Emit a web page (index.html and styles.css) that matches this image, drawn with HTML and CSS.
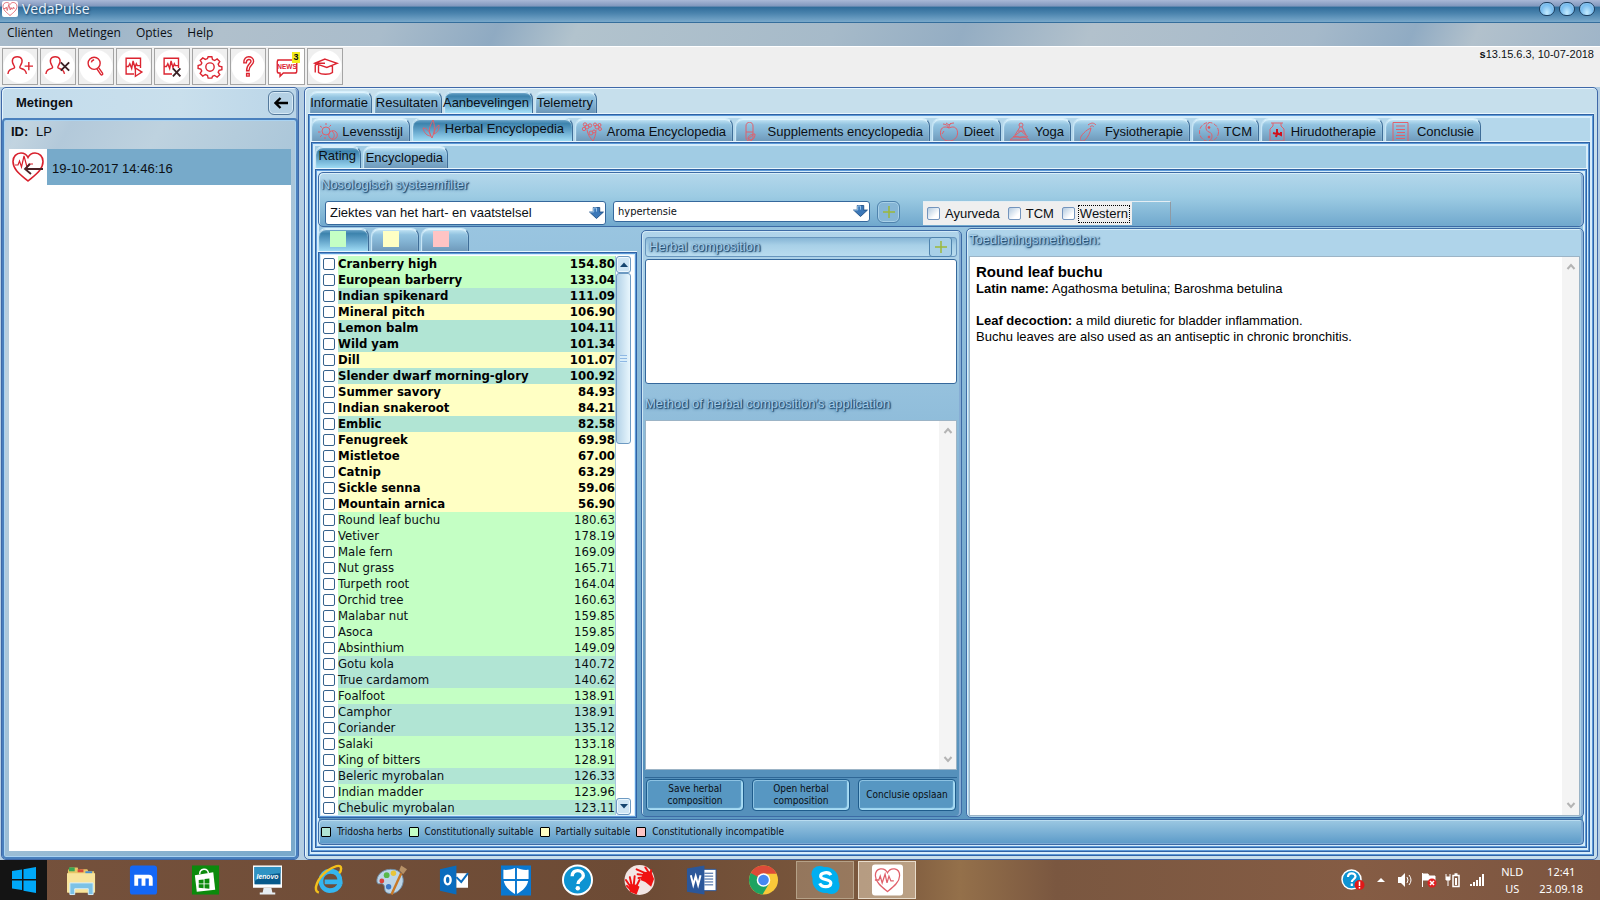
FILE: index.html
```html
<!DOCTYPE html>
<html lang="nl">
<head>
<meta charset="utf-8">
<title>VedaPulse</title>
<link rel="stylesheet" href="styles.css">
</head>
<body>
<svg class="defs" aria-hidden="true">
  <symbol id="heart" viewBox="0 0 32 32"><path d="M16 29C9 23 2 18 2 10.500C2 6 5.500 3 9.500 3c3 0 5 1.500 6.500 4c1.500-2.500 3.500-4 6.500-4C26.500 3 30 6 30 10.500C30 18 23 23 16 29z"/><path d="M3 15h4l1.500-3 2 7 3-12 3 11 1.500-5 1.500 3h2l1.500-4 1.500 4"/></symbol>
  <symbol id="user" viewBox="0 0 28 28"><path d="M1 21.500c.5-4.500 3-5 6-6 1.500-.5 1.500-1.500.5-3C4 7 6 3 11 3s7 4 3.500 9.500c-1 1.500-1 2.500.5 3 3 1 5 1.500 6 6"/></symbol>
  <symbol id="sheet" viewBox="0 0 28 28"><path d="M14 21.500H5.500v-17H21V15M5.500 13.500H8l1.500-3 2 5 1.500-8 2 7 1.500-4 1 2H21"/></symbol>
  <symbol id="drop" viewBox="0 0 16 13"><path d="M4.500.5h7v5H15.500L8 12.500.5 5.500h4z" fill="#3c78b8" stroke="#1d4f86"/><path d="M1 5.500h4V1h3v4" stroke="#9fcaf0" fill="none"/></symbol>
  <symbol id="plus" viewBox="0 0 12 12"><path d="M6 0v12M0 6h12" stroke="#9cb83a" stroke-width="1.500" fill="none"/></symbol>
  <symbol id="chev-up" viewBox="0 0 10 8"><path d="M1.500 6L5 2l3.500 4" fill="none" stroke="#b4b4b4" stroke-width="2"/></symbol>
  <symbol id="chev-down" viewBox="0 0 10 8"><path d="M1.500 2L5 6l3.500-4" fill="none" stroke="#b4b4b4" stroke-width="2"/></symbol>
  <symbol id="help" viewBox="0 0 32 32"><circle cx="16" cy="16" r="15" fill="#0d93d2" stroke="#fff" stroke-width="2"/><path d="M10.500 12c0-8 11.500-7 11.500-.5 0 4-5.500 4-5.500 8.500" fill="none" stroke="#fff" stroke-width="3.500"/><circle cx="16.300" cy="24.500" r="2.300" fill="#fff"/></symbol>
</svg>

<div class="app">
  <header class="titlebar">
    <svg class="app-logo"><use href="#heart"/></svg>
    <h1 class="app-title">VedaPulse</h1>
    <div class="window-buttons">
      <button type="button" aria-label="Minimize"></button><button type="button" aria-label="Maximize"></button><button type="button" aria-label="Close"></button>
    </div>
  </header>

  <nav class="menubar">
    <button type="button">Cliënten</button><button type="button">Metingen</button><button type="button">Opties</button><button type="button">Help</button>
  </nav>

  <div class="toolbar">
    <button type="button" class="tool" aria-label="Add client"><svg viewBox="0 0 28 28"><use href="#user"/><path d="M19 13h9M23.500 8.500v9"/></svg></button>
    <button type="button" class="tool" aria-label="Remove client"><svg viewBox="0 0 28 28"><use href="#user"/><path class="dark" d="M17 9l9 9M26 9l-9 9"/></svg></button>
    <button type="button" class="tool" aria-label="Search"><svg viewBox="0 0 28 28"><circle cx="12" cy="10" r="6.500"/><path d="M9 9c.3-2 1.500-2.500 3-2.800M15 16l4 6c1 1.500 3 0 2-1.500l-4-5.500"/></svg></button>
    <button type="button" class="tool" aria-label="Start measurement"><svg viewBox="0 0 28 28"><use href="#sheet"/><path class="filled" d="M15.500 15v9l7-4.500z"/></svg></button>
    <button type="button" class="tool" aria-label="Delete measurement"><svg viewBox="0 0 28 28"><use href="#sheet"/><path class="dark" d="M15 15.500l8 8.500M23 15.500L15 24"/></svg></button>
    <button type="button" class="tool" aria-label="Settings"><svg viewBox="0 0 28 28"><circle cx="14" cy="14" r="4.500"/><path d="M12 3h4l.7 3 2.300 1L21.700 5.300l2.800 2.800-1.700 2.700 1 2.200 3 .8v3l-3 .8-1 2 1.700 2.700-2.800 2.500-2.800-1.700-2.200 1L16 26h-4l-.7-2.900-2.300-1-2.800 1.700L3.400 21l1.700-2.700-1-2L1.200 15.500v-3l3-.9 1-2L3.500 6.900l2.700-2.700L9 5.800l2.300-.9z"/></svg></button>
    <button type="button" class="tool" aria-label="Help"><svg viewBox="0 0 28 28"><path d="M9.500 9.500c-.5-9 11-8 10.500-1.500-.3 4-5 4-5 10h-2.500c0-7 4.500-7.500 4.700-10 .2-3-5-3-5 1.500zM12.500 21h2.800v2.800h-2.800z"/></svg></button>
    <button type="button" class="tool news" aria-label="News"><svg viewBox="0 0 28 28"><path d="M3.500 6.500h19q2 0 2 2v10q0 2-2 2H10l-3.500 3.500v-3.500H5.500q-2 0-2-2v-10q0-2 2-2"/><text x="14" y="16">NEWS</text></svg><span class="badge">3</span></button>
    <button type="button" class="tool" aria-label="Academy"><svg viewBox="0 0 28 28"><path d="M14 5.500L27 10 16 14.500 3 10zM7 12v8c3 2.500 12 2.500 15 0v-7M14 10H7l-3.500 2v8"/></svg></button>
    <p class="version"><b>s</b>13.15.6.3, 10-07-2018</p>
  </div>

  <div class="main">
    <aside class="sidebar">
      <div class="side-head"><h2>Metingen</h2>
        <button type="button" class="back" aria-label="Collapse"><svg viewBox="0 0 14 12"><path d="M1 6h13M6.500 1L1.500 6l5 5" fill="none" stroke="#000" stroke-width="2.300"/></svg></button>
      </div>
      <div class="side-body">
        <p class="client"><b>ID:</b> LP</p>
        <div class="measure-list">
          <button type="button" class="measure"><svg viewBox="0 0 38 36"><path d="M19 32C12 26 4 21 4 12.500c0-5 3.500-8.500 8-8.500 3 0 5.500 1.500 7 4.500C20.500 5.500 23 4 26 4c4.500 0 8 3.500 8 8.500C34 21 26 26 19 32z" fill="none" stroke="#d8202c" stroke-width="1.600"/><path d="M6 16h3l1.500-4 2 6 2.500-11 3 11 2-3h4" fill="none" stroke="#d8202c" stroke-width="1.200"/><path d="M16 20h18M21 15l-5 5 6 5" fill="none" stroke="#4a2226" stroke-width="1.800"/></svg><span>19-10-2017 14:46:16</span></button>
        </div>
      </div>
    </aside>

    <section class="workspace">
      <div class="tabs tabs-main" role="tablist">
        <button type="button" class="tab">Informatie</button><button type="button" class="tab">Resultaten</button><button type="button" class="tab active">Aanbevelingen</button><button type="button" class="tab">Telemetry</button>
      </div>
      <div class="pane pane-a">
        <div class="tabs tabs-sub" role="tablist">
          <button type="button" class="tab"><svg viewBox="0 0 20 20"><circle cx="8" cy="9" r="4"/><path d="M8 1v2M2 4l2 1.500M0 10h2.500M2 15l2-2M7 17v-2M13 3l-1.500 1.500"/><circle cx="15" cy="13" r="4.300"/><path d="M14 9c3 3 3 6 0 8"/></svg>Levensstijl</button>
          <button type="button" class="tab active"><svg viewBox="0 0 20 20"><path d="M11 19C7 13 8 8 12 1c2 6 2 11-1 18zM10 17C8 11 5 9 2 9c1 5 4 8 8 8zM13 15c1-5 2-7 5-9 0 5-1 7-5 9z"/></svg>Herbal Encyclopedia</button>
          <button type="button" class="tab"><svg viewBox="0 0 20 20"><circle cx="5" cy="5" r="2"/><circle cx="3" cy="2.500" r="1.700"/><circle cx="8" cy="3.500" r="1.700"/><circle cx="2" cy="7" r="1.700"/><circle cx="15" cy="5" r="2"/><circle cx="17.500" cy="3" r="1.500"/><circle cx="18" cy="7" r="1.500"/><circle cx="13" cy="2.500" r="1.500"/><circle cx="9" cy="11" r="2"/><circle cx="12" cy="9.500" r="1.500"/><path d="M5 8c1 5 3 8 6 11M14 8c0 5-2 9-3 11"/></svg>Aroma Encyclopedia</button>
          <button type="button" class="tab"><svg viewBox="0 0 20 20"><path d="M4 4c0-5 7-5 7 0v6H4zM4 10v6c0 4 7 4 7 0v-6M6 17c0-4 4-5 7-5 0 5-3 7-7 5zl5-4"/></svg>Supplements encyclopedia</button>
          <button type="button" class="tab"><svg viewBox="0 0 20 20"><path d="M10 6C4 3 1 7 1.500 12c.5 4 4 7 8.500 7s8-3 8.500-7C19 7 16 3 10 6zM10 6c-1-2-3-4-6-4M10 5c0-3 2-4 5-4M7 1l3 2 2-2M5 9l-2 3"/></svg>Dieet</button>
          <button type="button" class="tab"><svg viewBox="0 0 20 20"><circle cx="11" cy="3" r="2"/><path d="M10 5L5 13M12 5l4 8M8 9h6M3 15l8-6 7 6M0 18c5-5 8-4 10-2 3-2 7-1 9 2zM4 15h13"/></svg>Yoga</button>
          <button type="button" class="tab"><svg viewBox="0 0 20 20"><path d="M11 6C6 8 1 13 0 17c0 2 3 3 5 1 3-3 5-7 6-12M8 3c4-3 6-2 8 0M10 5c2-2 3-1 4 0"/></svg>Fysiotherapie</button>
          <button type="button" class="tab"><svg viewBox="0 0 20 20"><circle cx="10" cy="10" r="9.500" stroke-dasharray="4 1.500"/><path d="M10 1c-4 1-4 8 0 9s4 7 0 9"/><circle cx="10" cy="5.500" r="1" fill="#d83030"/><circle cx="10" cy="15" r="1" fill="#d83030"/></svg>TCM</button>
          <button type="button" class="tab"><svg viewBox="0 0 20 20"><path d="M3 1h12M5 1v3L2 7v12h14V7l-3-3V1"/><path d="M5 11l4 1V7m-1 8l1-4 4 2v-3" stroke="#d0101c" stroke-width="2"/></svg>Hirudotherapie</button>
          <button type="button" class="tab"><svg viewBox="0 0 20 20"><path d="M1 .5h15v19H1zM4 4h9M4 7.500h9M5 10.500h8M4 13.500h9M4 16.500h9"/></svg>Conclusie</button>
        </div>
        <div class="pane pane-b">
          <div class="tabs tabs-view" role="tablist">
            <button type="button" class="tab active">Rating</button><button type="button" class="tab">Encyclopedia</button>
          </div>
          <div class="pane pane-c">
            <div class="filter">
              <h3 class="engraved">Nosologisch systeemfilter</h3>
              <div class="filter-row">
                <div class="combo combo-group"><select aria-label="Systeem"><option>Ziektes van het hart- en vaatstelsel</option></select><svg><use href="#drop"/></svg></div>
                <div class="combo combo-item"><select aria-label="Aandoening"><option>hypertensie</option></select><svg><use href="#drop"/></svg></div>
                <button type="button" class="add" aria-label="Add filter"><svg><use href="#plus"/></svg></button>
                <fieldset class="traditions">
                  <div class="checks">
                    <label><input type="checkbox"><span>Ayurveda</span></label>
                    <label><input type="checkbox"><span>TCM</span></label>
                    <label class="focused"><input type="checkbox"><span>Western</span></label>
                  </div>
                </fieldset>
              </div>
            </div>

            <div class="columns">
              <div class="herbs">
                <div class="tabs tabs-color">
                  <button type="button" class="tab active" aria-label="Suitable"><i class="sw green"></i></button><button type="button" class="tab" aria-label="Partially suitable"><i class="sw yellow"></i></button><button type="button" class="tab" aria-label="Incompatible"><i class="sw pink"></i></button>
                </div>
                <div class="pane herb-pane">
                  <div class="herb-list">
                    <div class="herb-scroll">
                    <table>
                      <tbody class="strong">
                      <tr class="green"><td><input type="checkbox" id="h1"></td><td><label for="h1">Cranberry high</label></td><td>154.80</td></tr>
                      <tr class="green"><td><input type="checkbox" id="h2"></td><td><label for="h2">European barberry</label></td><td>133.04</td></tr>
                      <tr class="teal"><td><input type="checkbox" id="h3"></td><td><label for="h3">Indian spikenard</label></td><td>111.09</td></tr>
                      <tr class="yellow"><td><input type="checkbox" id="h4"></td><td><label for="h4">Mineral pitch</label></td><td>106.90</td></tr>
                      <tr class="teal"><td><input type="checkbox" id="h5"></td><td><label for="h5">Lemon balm</label></td><td>104.11</td></tr>
                      <tr class="teal"><td><input type="checkbox" id="h6"></td><td><label for="h6">Wild yam</label></td><td>101.34</td></tr>
                      <tr class="yellow"><td><input type="checkbox" id="h7"></td><td><label for="h7">Dill</label></td><td>101.07</td></tr>
                      <tr class="teal"><td><input type="checkbox" id="h8"></td><td><label for="h8">Slender dwarf morning-glory</label></td><td>100.92</td></tr>
                      <tr class="yellow"><td><input type="checkbox" id="h9"></td><td><label for="h9">Summer savory</label></td><td>84.93</td></tr>
                      <tr class="yellow"><td><input type="checkbox" id="h10"></td><td><label for="h10">Indian snakeroot</label></td><td>84.21</td></tr>
                      <tr class="teal"><td><input type="checkbox" id="h11"></td><td><label for="h11">Emblic</label></td><td>82.58</td></tr>
                      <tr class="yellow"><td><input type="checkbox" id="h12"></td><td><label for="h12">Fenugreek</label></td><td>69.98</td></tr>
                      <tr class="yellow"><td><input type="checkbox" id="h13"></td><td><label for="h13">Mistletoe</label></td><td>67.00</td></tr>
                      <tr class="yellow"><td><input type="checkbox" id="h14"></td><td><label for="h14">Catnip</label></td><td>63.29</td></tr>
                      <tr class="yellow"><td><input type="checkbox" id="h15"></td><td><label for="h15">Sickle senna</label></td><td>59.06</td></tr>
                      <tr class="yellow"><td><input type="checkbox" id="h16"></td><td><label for="h16">Mountain arnica</label></td><td>56.90</td></tr>
                      </tbody>
                      <tbody>
                      <tr class="green"><td><input type="checkbox" id="h17"></td><td><label for="h17">Round leaf buchu</label></td><td>180.63</td></tr>
                      <tr class="green"><td><input type="checkbox" id="h18"></td><td><label for="h18">Vetiver</label></td><td>178.19</td></tr>
                      <tr class="green"><td><input type="checkbox" id="h19"></td><td><label for="h19">Male fern</label></td><td>169.09</td></tr>
                      <tr class="green"><td><input type="checkbox" id="h20"></td><td><label for="h20">Nut grass</label></td><td>165.71</td></tr>
                      <tr class="green"><td><input type="checkbox" id="h21"></td><td><label for="h21">Turpeth root</label></td><td>164.04</td></tr>
                      <tr class="green"><td><input type="checkbox" id="h22"></td><td><label for="h22">Orchid tree</label></td><td>160.63</td></tr>
                      <tr class="green"><td><input type="checkbox" id="h23"></td><td><label for="h23">Malabar nut</label></td><td>159.85</td></tr>
                      <tr class="green"><td><input type="checkbox" id="h24"></td><td><label for="h24">Asoca</label></td><td>159.85</td></tr>
                      <tr class="green"><td><input type="checkbox" id="h25"></td><td><label for="h25">Absinthium</label></td><td>149.09</td></tr>
                      <tr class="teal"><td><input type="checkbox" id="h26"></td><td><label for="h26">Gotu kola</label></td><td>140.72</td></tr>
                      <tr class="teal"><td><input type="checkbox" id="h27"></td><td><label for="h27">True cardamom</label></td><td>140.62</td></tr>
                      <tr class="green"><td><input type="checkbox" id="h28"></td><td><label for="h28">Foalfoot</label></td><td>138.91</td></tr>
                      <tr class="teal"><td><input type="checkbox" id="h29"></td><td><label for="h29">Camphor</label></td><td>138.91</td></tr>
                      <tr class="teal"><td><input type="checkbox" id="h30"></td><td><label for="h30">Coriander</label></td><td>135.12</td></tr>
                      <tr class="green"><td><input type="checkbox" id="h31"></td><td><label for="h31">Salaki</label></td><td>133.18</td></tr>
                      <tr class="green"><td><input type="checkbox" id="h32"></td><td><label for="h32">King of bitters</label></td><td>128.91</td></tr>
                      <tr class="teal"><td><input type="checkbox" id="h33"></td><td><label for="h33">Beleric myrobalan</label></td><td>126.33</td></tr>
                      <tr class="green"><td><input type="checkbox" id="h34"></td><td><label for="h34">Indian madder</label></td><td>123.96</td></tr>
                      <tr class="teal"><td><input type="checkbox" id="h35"></td><td><label for="h35">Chebulic myrobalan</label></td><td>123.11</td></tr>
                      </tbody>
                    </table>
                    </div>
                    <div class="skin-bar">
                      <button type="button" aria-label="Scroll up"><svg viewBox="0 0 8 5"><path d="M0 5l4-4.500L8 5z"/></svg></button>
                      <div class="thumb"></div>
                      <div class="track"></div>
                      <button type="button" aria-label="Scroll down"><svg viewBox="0 0 8 5"><path d="M0 0l4 4.500L8 0z"/></svg></button>
                    </div>
                  </div>
                </div>
              </div>

              <div class="composition">
                <div class="comp-head"><h3 class="engraved">Herbal composition</h3><button type="button" class="add add-wide" aria-label="Add herb"><svg><use href="#plus"/></svg></button></div>
                <div class="comp-box"></div>
                <label class="engraved method-label" for="method">Method of herbal composition's application</label>
                <div class="method"><textarea id="method"></textarea><div class="plain-bar"><svg><use href="#chev-up"/></svg><svg><use href="#chev-down"/></svg></div></div>
                <div class="comp-actions">
                  <button type="button">Save herbal<br>composition</button><button type="button">Open herbal<br>composition</button><button type="button">Conclusie opslaan</button>
                </div>
              </div>

              <div class="details">
                <h3 class="engraved">Toedieningsmethoden:</h3>
                <div class="article-wrap">
                  <article>
                    <h4>Round leaf buchu</h4>
                    <p><b>Latin name:</b> Agathosma betulina; Baroshma betulina</p>
                    <p class="spaced"><b>Leaf decoction:</b> a mild diuretic for bladder inflammation.</p>
                    <p>Buchu leaves are also used as an antiseptic in chronic bronchitis.</p>
                  </article>
                  <div class="plain-bar"><svg><use href="#chev-up"/></svg><svg><use href="#chev-down"/></svg></div>
                </div>
              </div>
            </div>

            <ul class="legend">
              <li><i class="teal"></i>Tridosha herbs</li><li><i class="green"></i>Constitutionally suitable</li><li><i class="yellow"></i>Partially suitable</li><li><i class="pink"></i>Constitutionally incompatible</li>
            </ul>
          </div>
        </div>
      </div>
    </section>
  </div>

  <footer class="taskbar">
    <button type="button" class="start" aria-label="Start"><svg viewBox="0 0 24 26"><path fill="#00a8f8" d="M0 4l10-1.500V12H0zM11.500 2.200L24 0v12H11.500zM0 13.500h10V23L0 21.500zM11.500 13.500H24V26l-12.500-2.200z"/></svg></button>
    <div class="apps">
      <button type="button" aria-label="Explorer"><svg viewBox="0 0 32 32"><path d="M2 6l2-3h8l1 3 2-1h7l1 2h6v22H2z" fill="#e8c766"/><path d="M3 3h6v4H3z" fill="#3aa655"/><path d="M12 5h6v3h-6z" fill="#d84b3a"/><path d="M20 7h7v3h-7z" fill="#4a90d0"/><path d="M1 9h29v20H1z" fill="#f8e49c"/><path d="M4 19h24v12h-5v-6H9v6H4z" fill="#7cc2e6" stroke="#d7eefa"/></svg></button>
      <button type="button" aria-label="Maxthon"><svg viewBox="0 0 32 32"><rect x="2" y="1" width="28" height="30" rx="3" fill="#1467f5"/><path d="M8.500 22V12.500h13q2 0 2 2V22M16 12.500V22" fill="none" stroke="#fff" stroke-width="4"/></svg></button>
      <button type="button" aria-label="Store"><svg viewBox="0 0 32 32"><path d="M2 1h28v30H2z" fill="#0c8a0c"/><path d="M5 11l19-3 2 18-19 2z" fill="#fff"/><path d="M10 10c0-6 8-7 9-1" fill="none" stroke="#fff" stroke-width="1.500"/><path d="M9 16l5-.5v4H9zM15 15l5-.5v5h-5zM9 20.500h5v4L9 24zM15 20.500h5v4.500l-5-.5z" fill="#0c8a0c"/></svg></button>
      <button type="button" aria-label="Lenovo"><svg viewBox="0 0 32 32"><path d="M1 1h30v23H1z" fill="#fff"/><path d="M2.500 2.500h27v18h-27z" fill="#075a8c"/><path d="M2.500 2.500h27V9C18 9 10 13 2.500 17z" fill="#2f93c4"/><text x="16" y="14.500" class="lenovo">lenovo</text><path d="M12 24h8l1 5h3v2H8v-2h3z" fill="#e6edf2"/></svg></button>
      <button type="button" aria-label="Internet Explorer"><svg viewBox="0 0 32 32"><path d="M27 20c-2 5-6 7-11 7C3 25 5 7 17 7c8 0 10 6 10 11H11" fill="none" stroke="#35b5ee" stroke-width="5"/><path d="M5 29C-2 27 4 14 13 7c7-5 15-8 15-3 0 3-1 4-2 5" fill="none" stroke="#f3c01c" stroke-width="2.500"/></svg></button>
      <button type="button" aria-label="Paint"><svg viewBox="0 0 32 32"><path d="M15 5C6 5 0 12 1 18c1 4 5 0 7 3s-1 8 6 9c9 1 15-8 14-15C27 8 22 5 15 5z" fill="#bcd5e8" stroke="#6f8ea8"/><circle cx="11" cy="11" r="3" fill="#58b848"/><circle cx="18" cy="9" r="2.800" fill="#e8c53a"/><circle cx="6" cy="17" r="2.500" fill="#d8443a"/><circle cx="13" cy="23" r="2.800" fill="#3d78c8"/><path d="M26 9L16 31" stroke="#c87826" stroke-width="2.500"/><path d="M24 6l2-5 6 4-4 5z" fill="#b79166"/></svg></button>
      <button type="button" aria-label="Outlook"><svg viewBox="0 0 32 32"><path d="M2 5l17-4v30L2 27z" fill="#0a6cbd"/><path d="M19 9h12v15H19z" fill="#fff"/><path d="M19 13l5 5 7-9" fill="none" stroke="#0a6cbd" stroke-width="2"/><ellipse cx="10" cy="16" rx="3" ry="4.500" fill="none" stroke="#fff" stroke-width="2.500"/></svg></button>
      <button type="button" aria-label="Defender"><svg viewBox="0 0 32 32"><path d="M1 1h31v31H1z" fill="#0a78d0"/><path d="M16.500 3c4 2 8 3 13 2.500v9C29 22 24 27 16.500 31 9 27 4 22 3.500 14.500v-9C8 6 13 5 16.500 3z" fill="#fff"/><path d="M16.500 2v30M2 16h29" stroke="#0a78d0" stroke-width="2"/></svg></button>
      <button type="button" aria-label="Help"><svg><use href="#help"/></svg></button>
      <button type="button" aria-label="Hands"><svg viewBox="0 0 32 32"><circle cx="16" cy="16" r="15.500" fill="#f2e6e4"/><g fill="none" stroke="#f01212" stroke-linecap="round" stroke-width="2"><path d="M13 5l9 4M14 10l8 1M22 3l4 6M15 14l7-1M28 6l-1 7M2 16l4 6M6 13l2 9M11 12l-1 10M16 16l-4 8M3 22l5 5"/></g><path d="M20 8l8-1 3 8-3 8-6-5-5-2zM5 20l8 1 3 2-3 8-7-3z" fill="#f01212"/></svg></button>
      <button type="button" aria-label="Word"><svg viewBox="0 0 32 32"><path d="M17 5h14v22H17z" fill="#fff" stroke="#2b579a"/><path d="M19 9h9M19 12h9M19 15h9M19 18h9M19 21h9" stroke="#2b579a"/><path d="M1 4l18-3v30L1 28z" fill="#2b579a"/><path d="M5 11l2.500 10L10 12l2.500 9L15 11" fill="none" stroke="#fff" stroke-width="2"/></svg></button>
      <button type="button" aria-label="Chrome"><svg viewBox="0 0 32 32"><circle cx="16" cy="16" r="15" fill="#f9c939"/><path d="M16 16L2.500 9.500A15 15 0 0 1 29.500 9.500H16z" fill="#dd4b39"/><path d="M16 16L2.800 8.900A15 15 0 0 0 15 31l6.500-11z" fill="#1ea362"/><circle cx="16" cy="16" r="7" fill="#fff"/><circle cx="16" cy="16" r="5.500" fill="#4688f1"/></svg></button>
      <button type="button" class="running" aria-label="Skype"><svg viewBox="0 0 32 32"><circle cx="10" cy="10" r="8.500" fill="#00aff0"/><circle cx="22" cy="22" r="8.500" fill="#00aff0"/><circle cx="16" cy="16" r="13.500" fill="#00aff0"/><path d="M21.500 11c-2-4-11-3-10.500 1.500.5 4 11 2 10.500 7-.5 4.500-9.500 4.500-11.500 0" fill="none" stroke="#fff" stroke-width="3.300"/></svg></button>
      <button type="button" class="running current" aria-label="VedaPulse"><svg viewBox="0 0 32 32"><rect width="32" height="32" rx="3" fill="#fff"/><g fill="none" stroke="#e0606a" stroke-width="1.300"><path d="M16 28C10 23 3.500 18 3.500 11.500 3.500 3 13 2.500 16 8.500 19 2.500 28.500 3 28.500 11.500 28.500 18 22 23 16 28z"/><path d="M3 16h4l1.500-4 2 7 3-9 2 9 2-7 2 5h3"/></g></svg></button>
    </div>
    <div class="tray">
      <svg class="tray-help" viewBox="0 0 24 22"><circle cx="10.500" cy="10.500" r="9.500" fill="#0d93d2" stroke="#fff" stroke-width="1.500"/><path d="M7 8c0-5 7.500-4.500 7.500-.5 0 2.500-3.700 3-3.700 5.500M10.800 14.500v2.500" fill="none" stroke="#fff" stroke-width="2.200"/><circle cx="18.500" cy="16" r="5" fill="#e01818"/><path d="M18.500 12.500v4.500M18.500 18v1.500" stroke="#fff" stroke-width="1.500"/></svg>
      <svg viewBox="0 0 16 16"><path d="M4 10l4-4 4 4z" fill="#fff"/></svg>
      <svg viewBox="0 0 16 16"><path d="M1 5h3l4-4v14l-4-4H1z" fill="#fff"/><path d="M10 5q2 3 0 6M12 3q4 5 0 10" fill="none" stroke="#fff"/></svg>
      <svg viewBox="0 0 16 16"><path d="M1.500 1v14M2 2h5l1 2h6v5H8L7 8H2z" fill="#fff" stroke="#fff"/><circle cx="11" cy="11" r="4.500" fill="#e02020"/><path d="M9 9l4 4M13 9l-4 4" stroke="#fff" stroke-width="1.500"/></svg>
      <svg viewBox="0 0 16 16"><path d="M8 3.500h6v11H8zM9.500 2h3" fill="none" stroke="#fff" stroke-width="1.500"/><path d="M10 6h2v7h-2z" fill="#fff"/><path d="M3 8v6M1 2v3M5 2v3M1 5h4v3H1z" fill="#fff" stroke="#fff"/></svg>
      <svg viewBox="0 0 16 16"><path d="M1 12h2v2H1zM4 10h2v4H4zM7 8h2v6H7zM10 5h2v9h-2zM13 2h2v12h-2z" fill="#fff"/></svg>
      <p>NLD<br>US</p>
      <p>12:41<br>23.09.18</p>
    </div>
  </footer>
</div>
</body>
</html>
```
FILE: styles.css
```css
* { box-sizing: border-box; }
body { margin: 0; font: 13px/16px "Liberation Sans", Arial, sans-serif; color: #0b0f14; }
h1, h2, h3, h4, p, ul { margin: 0; padding: 0; font-size: 13px; }
button, select, textarea { font: inherit; color: inherit; border: 0; padding: 0; margin: 0; background: none; }
svg { fill: none; }
.defs { position: absolute; width: 0; height: 0; }
.green { background: #c4ffc4; }
.yellow { background: #ffffc4; }
.pink { background: #ffc4c4; }
.teal { background: #b1e5d4; }

.app { display: flex; flex-direction: column; height: 100vh; min-height: 600px; overflow: hidden; }

.titlebar { display: flex; align-items: center; gap: 4px; flex: 0 0 23px; padding: 0 5px 4px 2px; border-bottom: 1px solid #356e9c; background: linear-gradient(#a9b8d6, #8097bd 28%, #2f6c9a 32%, #4a83ad 60%, #7aa9cb); }
.app-logo { width: 16px; height: 16px; background: #fff; border-radius: 2px; stroke: #e2707a; stroke-width: 2; }
.app-title { flex: 1; color: #e9f2fa; font: 14px/18px "Open Sans", "Noto Sans", sans-serif; text-shadow: 1px 1px 2px #1d4468; }
.window-buttons { display: flex; gap: 4px; }
.window-buttons button { width: 16px; height: 14px; border-radius: 8px; border: 1px solid #1d3f60; background: radial-gradient(ellipse at 50% 80%, #c4ebff, #78bcee 60%, #b4d8f2); }

.menubar { display: flex; align-items: center; gap: 15px; flex: 0 0 23px; padding: 0 7px 3px; background: linear-gradient(115deg, #aabccb 0, #9db5c9 6%, #b0c0cc 14%, #a9bccb 24%, #8faac2 31%, #b2c3cd 36%, #a6bac9 52%, #94adc3 60%, #b2c1cc 68%, #a5b9ca 82%, #90abc3 88%, #b2c1cc 92%, #9fb5c8); font: 12px/20px "Open Sans", "Noto Sans", sans-serif; }

.toolbar { display: flex; align-items: flex-start; gap: 2px; flex: 0 0 41px; padding: 1px 6px 0 2px; background: #efefef; border-top: 1px solid #fff; }
.tool { position: relative; display: grid; place-items: center; width: 36px; height: 37px; border: 1px solid #a4a4a4; background: radial-gradient(circle, #fff 16px, #efefef 17px); }
.tool svg { width: 26px; height: 26px; stroke: #dc2430; stroke-width: 1.500; overflow: visible; }
.tool .dark { stroke: #3a2226; stroke-width: 2; }
.tool .filled { fill: #fff; }
.tool text { font: bold 7px "Liberation Sans", sans-serif; text-anchor: middle; fill: #dc2430; stroke: none; }
.news { width: 37px; background: #fff; }
.badge { position: absolute; top: 3px; right: 4px; width: 8px; height: 11px; background: #f4ec1c; font: bold 9px/11px "Liberation Sans", sans-serif; }
.version { margin-left: auto; font-size: 11px; line-height: 13px; font-weight: normal; }

.main { display: flex; gap: 5px; flex: 1; min-height: 0; padding: 0 2px 0 1px; background: #b4cee3; }
.sidebar { display: flex; flex-direction: column; flex: 0 0 298px; border: 1px solid #3f68a8; border-radius: 5px; background: linear-gradient(90deg, #c3dcec, #c9dfec 60%, #bad5e8); box-shadow: inset 1px 1px 0 #e4f4fd, inset -2px 0 0 #7fa3cc; }
.side-head { display: flex; align-items: center; justify-content: space-between; height: 30px; padding: 0 4px 0 14px; }
.back { display: grid; place-items: center; width: 26px; height: 24px; border: 1px solid #54799c; border-radius: 6px; background: #b4d0e4; box-shadow: inset 0 0 0 1px #d8eaf6; }
.back svg { width: 14px; height: 12px; }
.side-body { display: flex; flex-direction: column; flex: 1; min-height: 0; padding: 2px 5px 6px 5px; border: 2px solid #4a80bd; border-radius: 4px; background: linear-gradient(120deg, #b6cfe2, #c2d4e0 20px, #b3c9da 60px, #bed2df 140px, #7aa9cb 600px); box-shadow: inset 0 0 0 1px #a9d3f2; }
.client { padding: 2px 2px 9px; }
.client b { margin-right: 4px; }
.measure-list { flex: 1; background: #fff; }
.measure { display: flex; width: 100%; height: 36px; background: #77aaca; text-align: left; }
.measure svg { width: 38px; height: 36px; background: #fff; }
.measure span { padding: 12px 5px; }

.workspace { display: flex; flex-direction: column; flex: 1; min-width: 0; padding: 2px 3px 3px; border: 1px solid #3f68a8; border-radius: 5px; background: #c6dfec; box-shadow: inset 1px 1px 0 #e8f6fe; }
.pane { display: flex; flex-direction: column; flex: 1; min-height: 0; min-width: 0; padding: 3px; border: 1px solid #2f62a4; box-shadow: 0 -1px 0 #e9f6fd, inset 0 0 0 1px #5d9ad8, inset 1px 1px 0 2px #d6edfb, inset -1px -1px 0 2px #d6edfb; }
.pane-a { padding: 3px 3px 3px 2px; background: #b4d7eb; }
.pane-b { padding: 2px 2px 3px 3px; background: #a1cce4; }
.pane-c { padding: 2px; background: linear-gradient(#9fc9e3, #5a96c0); }
.herb-pane { padding: 2px; }

.tabs { display: grid; gap: 2px; }
.tab { display: flex; align-items: center; justify-content: flex-end; padding: 0 4px; border: 1px solid #3e6d98; border-top-color: #d7effb; border-left-color: #c8e6f6; border-bottom: 0; border-radius: 8px 8px 0 0; background: linear-gradient(#c5e6f6, #92c3e0 25%, #83b3d3 55%, #6d97b8); white-space: nowrap; box-shadow: inset 0 1px 1px #e4f6fe; }
.tab.active { background: linear-gradient(#6fa8cc, #3d83ad 20%, #62a3c9 50%, #a4e0f8); }
.tabs-main { grid-template-columns: 63px 68px 89px 62px; height: 22px; margin: 1px 0 1px 1px; }
.tabs-main .tab { padding: 0 3px; }
.tabs-sub { grid-template-columns: 99px 161px 158px 195px 69px 68px 117px 67px 122px 96px; height: 24px; }
.tabs-sub .tab { justify-content: space-between; padding: 2px 6px 0; }
.tabs-sub .tab.active { padding: 0 8px 3px; }
.tabs-sub svg { width: 20px; height: 20px; stroke: #e0606c; stroke-width: 1; }
.tabs-view { grid-template-columns: 46px 85px; height: 23px; margin-top: 1px; }
.tabs-view .active { padding-bottom: 4px; }

.engraved { color: #a6cde8; font-size: 13px; font-weight: normal; text-shadow: 1px 1px 1px #1c486e, 0 1px 3px #2c5f8a, 1px 0 1px #2c5f8a; }
.filter { display: flex; flex-direction: column; gap: 8px; height: 55px; padding: 4px 2px 0; border: 1px solid #3d6ba5; border-radius: 5px; background: linear-gradient(#b4d7eb, #9ccbe3 45%, #70a8cd); box-shadow: inset 1px 1px 0 #d8eef9, inset -2px 0 0 #8fb4d8; }
.filter-row { display: flex; align-items: flex-start; gap: 7px; padding-left: 4px; }
.combo { position: relative; display: flex; border: 1px solid #35689c; border-radius: 3px; background: #fff; }
.combo select { width: 100%; appearance: none; padding: 0 4px; }
.combo svg { position: absolute; right: 1px; top: 5px; width: 15px; height: 12px; pointer-events: none; }
.combo-group { width: 281px; height: 24px; }
.combo-item { width: 257px; height: 21px; font: 11px "DejaVu Sans Condensed", "DejaVu Sans", sans-serif; }
.combo-item svg { top: 3px; }
.add { display: grid; place-items: center; width: 23px; height: 22px; border: 1px solid #4f83ad; border-radius: 6px; background: #86b6d6; box-shadow: inset 0 0 0 1px #a8d0e8; }
.add svg { width: 12px; height: 12px; }
.traditions { margin: 0 0 0 16px; padding: 0 38px 0 0; border: 1px solid #8f9aa4; border-width: 1px 1px 0 0; border-top-color: #e4eef4; }
.checks { display: flex; gap: 7px; padding: 0 3px 0 4px; background: #efefef; }
.checks label { display: flex; align-items: center; gap: 4px; height: 23px; }
.checks span { padding: 0 1px; }
.checks .focused span { outline: 1px dotted #000; }
input[type="checkbox"] { appearance: none; display: block; width: 12px; height: 12px; margin: 0; border: 1px solid #35618c; border-radius: 2px; background: #fff; }
.checks input { width: 13px; height: 13px; border-color: #7394bd; background: linear-gradient(135deg, #b4cbe0, #fff 70%); }

.columns { display: grid; grid-template-columns: 319px 321px minmax(0, 1fr); gap: 4px; flex: 1; min-height: 0; padding: 1px 0; }
.herbs { display: flex; flex-direction: column; min-height: 0; }
.tabs-color { grid-template-columns: 51px 48px 48px; height: 24px; }
.tabs-color .tab { justify-content: flex-start; align-items: flex-start; padding: 2px 11px; }
.sw { width: 16px; height: 16px; }
.herb-list { display: flex; flex: 1; min-height: 0; padding: 1px 3px 0 2px; background: #fff; overflow: hidden; }
.herb-scroll { flex: 1; overflow: hidden; }
.herb-list table { width: 100%; border-collapse: collapse; font: 13px/16px "DejaVu Sans Condensed", "DejaVu Sans", sans-serif; }
.herb-list tbody.strong { font-weight: bold; color: #000; }
.herb-list td { height: 16px; padding: 0; line-height: 16px; white-space: nowrap; }
.herb-list label { display: block; }
.herb-list td:first-child { width: 15px; background: #fff; }
.herb-list td:last-child { text-align: right; }
.skin-bar { display: flex; flex-direction: column; width: 16px; border-left: 1px solid #a9c6dd; }
.skin-bar button { display: grid; place-items: center; height: 17px; border: 1px solid #6d9ac2; border-radius: 3px; background: #cfe5f4; box-shadow: inset 0 0 0 1px #eef8fe; }
.skin-bar button svg { width: 8px; height: 5px; fill: #17456f; }
.thumb { height: 171px; border: 1px solid #6d9ac2; border-radius: 3px; background: repeating-linear-gradient(#8fb8e4 0 1px, #d8edf9 1px 3px) center / 7px 8px no-repeat, linear-gradient(90deg, #b4d3e8, #e8f6fd); }
.track { flex: 1; }

.composition { display: flex; flex-direction: column; min-height: 0; margin: 2px 0 1px; padding: 6px 4px 2px 3px; border: 1px solid #3d6ba5; border-radius: 5px; background: linear-gradient(#b0d4ea, #8dbbd9 35%, #5590bb 92%); box-shadow: inset 1px 1px 0 #cfe8f6, inset -2px 0 0 #86add4; }
.comp-head { display: flex; align-items: center; justify-content: space-between; height: 20px; padding: 0 4px 0 3px; border: 1px solid #6795bd; border-radius: 3px; background: linear-gradient(#86b5d5, #a8d0e7 40%, #b9dcef); }
.add-wide { height: 20px; border-radius: 3px; background: #a8d0e7; }
.comp-box { flex: 0 0 125px; margin-top: 2px; border: 1px solid #35689c; border-radius: 3px; background: #fff; }
.method-label { padding: 12px 0 8px; }
.method, .article-wrap { display: flex; flex: 1; min-height: 0; border: 1px solid #9cb4c6; background: #fff; }
.method textarea { flex: 1; min-width: 0; padding: 3px; resize: none; outline: 0; }
.plain-bar { display: flex; flex-direction: column; justify-content: space-between; align-items: center; width: 17px; padding: 6px 0; background: #f4f4f4; }
.plain-bar svg { width: 10px; height: 8px; }
.comp-actions { display: grid; grid-template-columns: repeat(3, 1fr); gap: 8px; margin-top: 7px; padding: 1px 1px 3px; border-top: 1px solid #2f6796; }
.comp-actions button { height: 32px; padding: 0 2px; border: 1px solid #1f5c8c; border-radius: 4px; background: #5797c2; box-shadow: inset 1px 1px 0 #8cc2e2, inset -2px -2px 1px #a8dcf4; font: 10px/12px "DejaVu Sans Condensed", "DejaVu Sans", sans-serif; white-space: nowrap; }

.details { display: flex; flex-direction: column; min-height: 0; padding: 3px 3px 1px 2px; border: 1px solid #3d6ba5; border-radius: 5px; background: #afd4ea; box-shadow: inset 1px 1px 0 #d8eef9, inset -2px 0 0 #8fb4d8; }
.details h3 { height: 24px; }
article { flex: 1; padding: 6px; color: #000; }
article h4 { font-size: 15px; line-height: 18px; }
.spaced { margin-top: 16px; }

.legend { display: flex; align-items: center; gap: 6px; height: 26px; padding: 0 2px; border: 1px solid #3d6ba5; border-radius: 4px; list-style: none; background: linear-gradient(#9cc8e2, #5b9ac8); box-shadow: inset 1px 1px 0 #b9dcf0, inset -2px -1px 0 #7ba8d4; font: 10px/12px "DejaVu Sans Condensed", "DejaVu Sans", sans-serif; }
.legend li { display: flex; align-items: center; gap: 6px; }
.legend i { width: 10px; height: 10px; border: 1px solid #000; border-radius: 1px; }

.taskbar { display: flex; flex: 0 0 40px; background: linear-gradient(90deg, #75513c, #6d4b35 40%, #7d5a3e 56%, #94704a 60%, #7a5740 66%, #855c44 85%, #7c5540); }
.start { display: grid; place-items: center; width: 47px; background: #141414; }
.start svg { width: 24px; height: 26px; }
.apps { display: flex; gap: 4px; padding: 1px 5px; }
.apps button { display: grid; place-items: center; width: 58px; height: 38px; }
.apps svg { width: 31px; height: 32px; }
.apps .running { border: 1px solid #b5a187; background: rgba(255, 240, 215, .22); }
.apps .current { border-color: #e8dccb; background: rgba(255, 240, 215, .45); }
.lenovo { font: italic bold 7px "Liberation Sans", sans-serif; text-anchor: middle; fill: #fff; }
.tray { display: flex; align-items: center; gap: 8px; margin-left: auto; padding-right: 17px; color: #fff; font: 12px/17px "Noto Sans", "Open Sans", sans-serif; text-align: center; }
.tray svg { width: 16px; height: 16px; }
.tray .tray-help { width: 24px; height: 22px; }
.tray p { font-size: 11px; margin-left: 8px; }
```
